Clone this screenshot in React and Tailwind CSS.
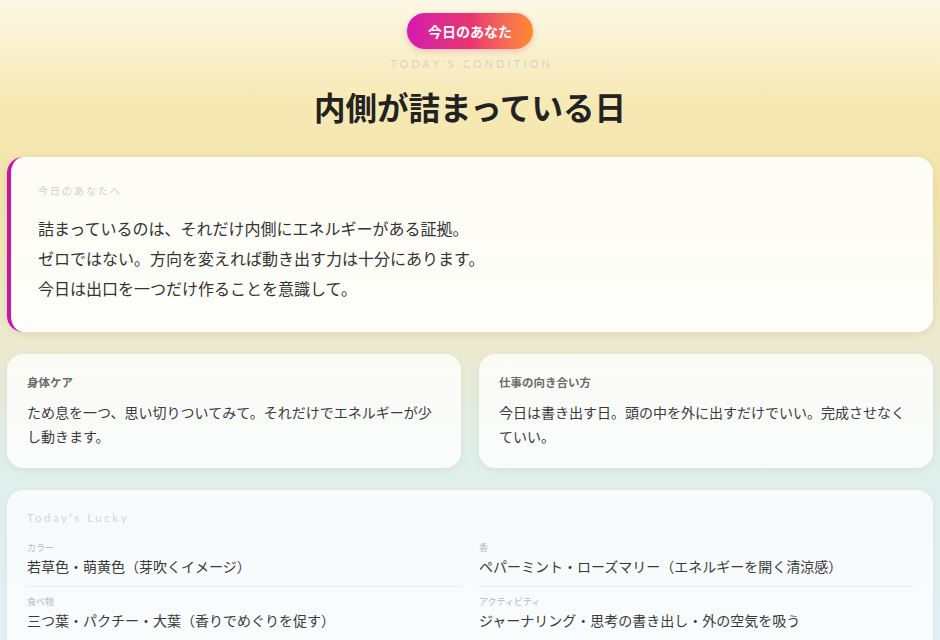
import React from "react";

const jp = { fontFamily: '"Noto Sans CJK JP", "Noto Sans", sans-serif' };

const lucky = [
  { label: "カラー", value: "若草色・萌黄色（芽吹くイメージ）" },
  { label: "香", value: "ペパーミント・ローズマリー（エネルギーを開く清涼感）" },
  { label: "食べ物", value: "三つ葉・パクチー・大葉（香りでめぐりを促す）" },
  { label: "アクティビティ", value: "ジャーナリング・思考の書き出し・外の空気を吸う" },
];

function SmallCard({ title, children }) {
  return (
    <div className="rounded-2xl bg-white/80 shadow-[0_2px_8px_rgba(0,0,0,0.05)] px-5 pt-[20px] pb-[20px]">
      <h3 className="text-[11.5px] font-bold text-[#6b6b6b] leading-4">{title}</h3>
      <p className="mt-[10px] text-[14px] leading-6 text-[#3a3a3a]">{children}</p>
    </div>
  );
}

export default function App() {
  return (
    <div
      style={jp}
      className="h-[640px] overflow-hidden bg-[linear-gradient(180deg,#fdf8e6_0%,#f6e9b4_16%,#f2e4aa_30%,#ede9cc_52%,#e0eee8_70%,#e4f1f8_100%)] px-[7px]"
    >
      <header className="flex flex-col items-center pt-[13px]">
        <div className="h-9 w-[126px] rounded-full bg-gradient-to-r from-[#d317ae] via-[#e8336f] to-[#ff8a2a] flex items-center justify-center text-white text-[14px] font-bold shadow-[0_2px_6px_rgba(220,40,120,0.25)]">
          今日のあなた
        </div>
        <p className="mt-[9px] text-[10.5px] tracking-[0.32em] text-[#d9d3c2] font-[Lato,sans-serif] leading-3 pl-[0.32em]">
          TODAY'S CONDITION
        </p>
        <h1 className="mt-[18px] text-[31.5px] font-bold text-[#222] leading-9">
          内側が詰まっている日
        </h1>
      </header>

      <section className="mt-[33px] rounded-2xl border-l-4 border-[#c913a9] bg-white/90 shadow-[0_2px_10px_rgba(0,0,0,0.07)] pl-[27px] pr-6 pt-[28px] pb-[29px]">
        <p className="text-[10px] tracking-[0.2em] text-[#cfcfcf] leading-3">今日のあなたへ</p>
        <div className="mt-[16px] text-[16px] leading-[30px] text-[#333]">
          <p>詰まっているのは、それだけ内側にエネルギーがある証拠。</p>
          <p>ゼロではない。方向を変えれば動き出す力は十分にあります。</p>
          <p>今日は出口を一つだけ作ることを意識して。</p>
        </div>
      </section>

      <div className="mt-[22px] grid grid-cols-2 gap-[18px]">
        <SmallCard title="身体ケア">
          ため息を一つ、思い切りついてみて。それだけでエネルギーが少し動きます。
        </SmallCard>
        <SmallCard title="仕事の向き合い方">
          今日は書き出す日。頭の中を外に出すだけでいい。完成させなくていい。
        </SmallCard>
      </div>

      <section className="mt-[22px] rounded-2xl bg-white/75 shadow-[0_2px_8px_rgba(0,0,0,0.05)] px-5 pt-[20px] pb-4">
        <p className="text-[11.5px] tracking-[0.22em] text-[#d2d6d8] font-[Lato,sans-serif] leading-4">
          Today's Lucky
        </p>
        <div className="mt-[14px] grid grid-cols-2 gap-x-[18px]">
          {lucky.map((item) => (
            <div key={item.label} className="border-b border-[#e8ecee] pt-[2px] pb-[10px] mb-[7px]">
              <p className="text-[9px] text-[#b8b8b8] leading-3">{item.label}</p>
              <p className="mt-[2px] text-[14px] text-[#3a3a3a] leading-5">{item.value}</p>
            </div>
          ))}
        </div>
      </section>
    </div>
  );
}
